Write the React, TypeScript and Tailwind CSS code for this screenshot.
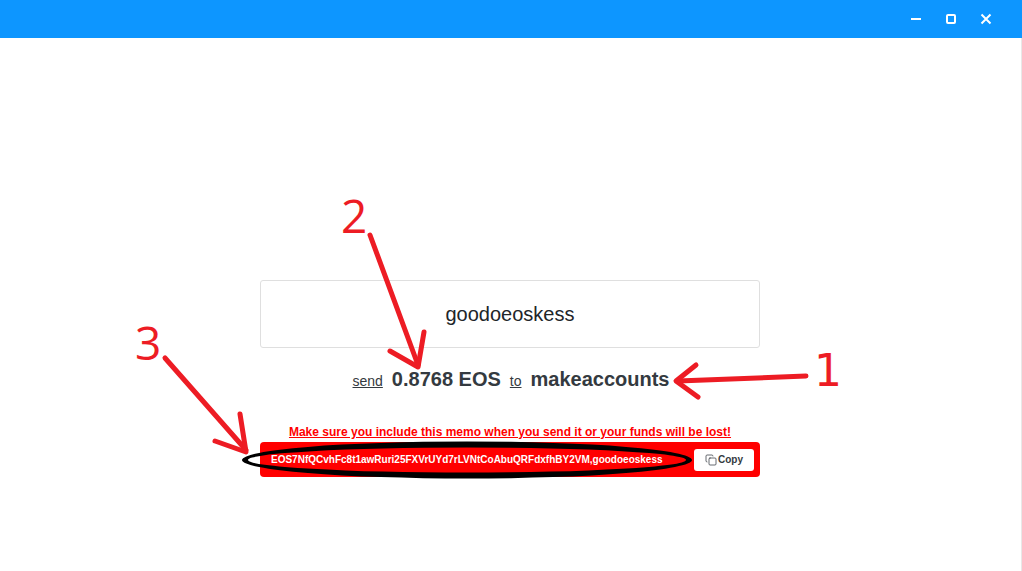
import { Copy } from 'lucide-react';

const arial = 'font-["Liberation_Sans",Arial,sans-serif]';

function WindowButtons() {
  return (
    <div className="flex items-center gap-[21px] pr-[29px]">
      <svg width="14" height="14" viewBox="0 0 14 14">
        <rect x="2" y="6" width="10" height="2" fill="#fff" />
      </svg>
      <svg width="14" height="14" viewBox="0 0 14 14">
        <rect x="3" y="3" width="8" height="8" rx="1" fill="none" stroke="#fff" strokeWidth="2" />
      </svg>
      <svg width="14" height="14" viewBox="0 0 14 14">
        <path d="M2.5 2.5 L11.5 11.5 M11.5 2.5 L2.5 11.5" stroke="#fff" strokeWidth="2" />
      </svg>
    </div>
  );
}

// the marks somebody painted over the screenshot
function Annotations() {
  return (
    <svg className="absolute left-0 top-0 pointer-events-none" width="1022" height="571" viewBox="0 0 1022 571">
      <path
        fillRule="evenodd"
        fill="#000"
        d="M242 460 A225 18.5 0 0 1 692 460 A225 18.5 0 0 1 242 460 Z M248 460 A219 12.5 0 0 0 686 460 A219 12.5 0 0 0 248 460 Z"
      />
      <g fill="none" stroke="#ed1c24" strokeWidth="5" strokeLinecap="round" strokeLinejoin="round">
        <path d="M370 235 L418 365" />
        <path d="M390 351 L418 367 L424 332" />
        <path d="M806 376 L678 381" />
        <path d="M696 365 L676 381 L698 397" />
        <path d="M165 358 L246 450" />
        <path d="M215 441 L246 452 L240 414" />
      </g>
    </svg>
  );
}

export default function App() {
  return (
    <div className={`relative h-[571px] w-[1022px] overflow-hidden bg-white ${arial}`}>
      <div className="flex h-[38px] items-center justify-end bg-[#0d96ff]">
        <WindowButtons />
      </div>

      <div className="flex flex-col items-center pr-[2px] pt-[242px]">
        <div className="flex h-[68px] w-[500px] items-center justify-center rounded-[3px] border border-[#dfdfdf] text-[20px] text-[#212529]">
          goodoeoskess
        </div>

        <div className="ml-[2px] mt-[16px] flex h-[22px] items-baseline text-[#343a40]">
          <span className="text-[14px] underline">send</span>
          <span className="ml-[9px] text-[20px] font-bold">0.8768 EOS</span>
          <span className="ml-[9px] text-[14px] underline">to</span>
          <span className="ml-[9px] text-[20px] font-bold">makeaccounts</span>
        </div>

        <div className="mt-[39px] h-[14px] text-[12px] leading-[14px] font-bold text-[#ff0000] underline">
          Make sure you include this memo when you send it or your funds will be lost!
        </div>

        <div className="mt-[3px] flex h-[35px] w-[500px] items-center justify-between rounded-[4px] bg-[#ff0000] pl-[11px] pr-[6px]">
          <span className="whitespace-nowrap text-[10px] font-bold text-white">
            EOS7NfQCvhFc8t1awRuri25FXVrUYd7rLVNtCoAbuQRFdxfhBY2VM,goodoeoskess
          </span>
          <button className="flex h-[22px] w-[60px] shrink-0 items-center justify-center gap-[1px] rounded-[3px] bg-white text-[10px] font-bold text-[#343a40]">
            <Copy size={12} strokeWidth={1.5} />
            Copy
          </button>
        </div>
      </div>

      <Annotations />

      <span className='absolute left-[814px] top-[344px] font-["DejaVu_Sans",sans-serif] text-[44px] leading-[54px] text-[#ed1c24]'>1</span>
      <span className='absolute left-[341px] top-[188px] font-["Open_Sans",sans-serif] text-[46px] leading-[54px] text-[#ed1c24]'>2</span>
      <span className='absolute left-[135px] top-[315px] font-["Open_Sans",sans-serif] text-[46px] leading-[54px] text-[#ed1c24]'>3</span>

      <div className="absolute right-0 top-[38px] h-[533px] w-px bg-[#e8e8e8]" />
    </div>
  );
}
